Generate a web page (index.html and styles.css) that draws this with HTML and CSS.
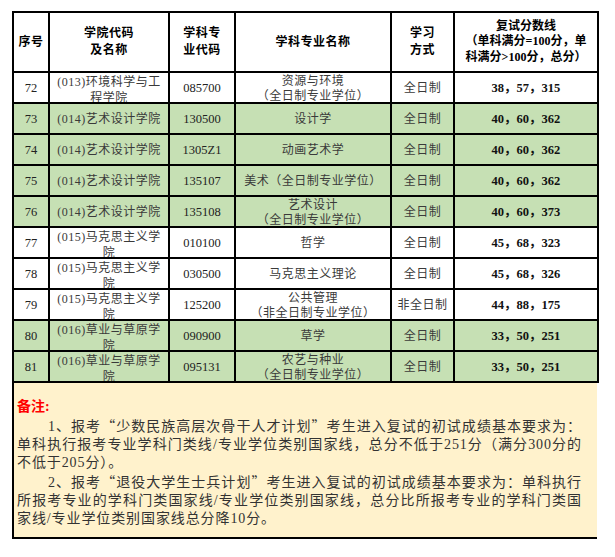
FILE: index.html
```html
<!DOCTYPE html>
<html lang="zh-CN">
<head>
<meta charset="utf-8">
<title>复试分数线</title>
<link rel="stylesheet" href="styles.css">
</head>
<body>
<div class="page">
  <table class="grid">
    <colgroup>
      <col class="c1"><col class="c2"><col class="c3"><col class="c4"><col class="c5"><col class="c6">
    </colgroup>
    <thead>
      <tr class="head">
        <th>序号</th>
        <th>学院代码<br>及名称</th>
        <th>学科专<br>业代码</th>
        <th>学科专业名称</th>
        <th>学习<br>方式</th>
        <th class="h6">复试分数线<br>（单科满分=100分，单<br>科满分&gt;100分，总分）</th>
      </tr>
    </thead>
    <tbody>
      <tr>
        <td class="n">72</td>
        <td><div class="clip">(013)环境科学与工程学院</div></td>
        <td class="n">085700</td>
        <td><div class="clip two">资源与环境<br>（全日制专业学位）</div></td>
        <td>全日制</td>
        <td class="s">38，57，315</td>
      </tr>
      <tr class="green">
        <td class="n">73</td>
        <td>(014)艺术设计学院</td>
        <td class="n">130500</td>
        <td>设计学</td>
        <td>全日制</td>
        <td class="s">40，60，362</td>
      </tr>
      <tr class="green">
        <td class="n">74</td>
        <td>(014)艺术设计学院</td>
        <td class="n">1305Z1</td>
        <td>动画艺术学</td>
        <td>全日制</td>
        <td class="s">40，60，362</td>
      </tr>
      <tr class="green">
        <td class="n">75</td>
        <td>(014)艺术设计学院</td>
        <td class="n">135107</td>
        <td>美术（全日制专业学位）</td>
        <td>全日制</td>
        <td class="s">40，60，362</td>
      </tr>
      <tr class="green">
        <td class="n">76</td>
        <td>(014)艺术设计学院</td>
        <td class="n">135108</td>
        <td><div class="clip two">艺术设计<br>（全日制专业学位）</div></td>
        <td>全日制</td>
        <td class="s">40，60，373</td>
      </tr>
      <tr>
        <td class="n">77</td>
        <td><div class="clip">(015)马克思主义学院</div></td>
        <td class="n">010100</td>
        <td>哲学</td>
        <td>全日制</td>
        <td class="s">45，68，323</td>
      </tr>
      <tr>
        <td class="n">78</td>
        <td><div class="clip">(015)马克思主义学院</div></td>
        <td class="n">030500</td>
        <td>马克思主义理论</td>
        <td>全日制</td>
        <td class="s">45，68，326</td>
      </tr>
      <tr>
        <td class="n">79</td>
        <td><div class="clip">(015)马克思主义学院</div></td>
        <td class="n">125200</td>
        <td><div class="clip two">公共管理<br>（非全日制专业学位）</div></td>
        <td>非全日制</td>
        <td class="s">44，88，175</td>
      </tr>
      <tr class="green">
        <td class="n">80</td>
        <td><div class="clip">(016)草业与草原学院</div></td>
        <td class="n">090900</td>
        <td>草学</td>
        <td>全日制</td>
        <td class="s">33，50，251</td>
      </tr>
      <tr class="green">
        <td class="n">81</td>
        <td><div class="clip">(016)草业与草原学院</div></td>
        <td class="n">095131</td>
        <td><div class="clip two">农艺与种业<br>（全日制专业学位）</div></td>
        <td>全日制</td>
        <td class="s">33，50，251</td>
      </tr>
    </tbody>
  </table>
  <div class="notes">
    <div class="note-title">备注:</div>
    <div class="line first">1、报考<span class="q">“</span>少数民族高层次骨干人才计划<span class="q">”</span>考生进入复试的初试成绩基本要求为：</div>
    <div class="line">单科执行报考专业学科门类线/专业学位类别国家线，总分不低于251分（满分300分的</div>
    <div class="line last">不低于205分）。</div>
    <div class="line first">2、报考<span class="q">“</span>退役大学生士兵计划<span class="q">”</span>考生进入复试的初试成绩基本要求为：单科执行</div>
    <div class="line">所报考专业的学科门类国家线/专业学位类别国家线，总分比所报考专业的学科门类国</div>
    <div class="line last">家线/专业学位类别国家线总分降10分。</div>
  </div>
</div>
</body>
</html>
```

FILE: styles.css
```css
* {
  box-sizing: border-box;
}

body {
  margin: 0;
  background: #ffffff;
  font-family: "Liberation Serif", "Noto Sans CJK SC", serif;
  color: #333333;
}

.page {
  padding: 11px 0 0 12px;
  width: 615px;
}

.grid {
  border-collapse: collapse;
  table-layout: fixed;
  width: 585px;
}

.c1 { width: 36px; }
.c2 { width: 120px; }
.c3 { width: 66px; }
.c4 { width: 156px; }
.c5 { width: 63px; }
.c6 { width: 144px; }

.grid th,
.grid td {
  border: 2px solid #000000;
  text-align: center;
  vertical-align: middle;
  padding: 0 5px;
}

.head {
  height: 60px;
}

.grid th {
  font-size: 12px;
  font-weight: 700;
  line-height: 17px;
  letter-spacing: 0.5px;
  color: #000000;
  padding: 0 2px;
}

.grid th.h6 {
  line-height: 15.5px;
  letter-spacing: 0;
}

.grid tbody tr {
  height: 31px;
}

.grid td {
  font-size: 12px;
  letter-spacing: 0.5px;
  color: #3a3a3a;
  line-height: 16px;
}

.grid td.n {
  font-size: 12.5px;
  letter-spacing: 0;
  color: #222222;
}

.grid td.s {
  font-size: 12.5px;
  font-weight: 700;
  letter-spacing: 0;
  color: #111111;
}

.green {
  background: #c6e0b4;
}

.clip {
  height: 29px;
  overflow: hidden;
  line-height: 16px;
  padding-top: 1px;
}

.clip.two {
  line-height: 15px;
  padding-top: 1px;
}

.notes {
  width: 585px;
  background: #fff2cc;
  border-left: 2px solid #000000;
  border-bottom: 2px solid #000000;
  padding: 15px 15px 9px 3px;
  font-size: 14px;
  line-height: 18px;
  letter-spacing: 0.9px;
  color: #333333;
}

.note-title {
  color: #ff0000;
  font-weight: 700;
  letter-spacing: 0;
}

.line {
  text-align: justify;
  text-align-last: justify;
}

.line.first {
  text-indent: 31px;
}

.line.last {
  text-align-last: left;
}

.q {
  font-family: "Noto Sans CJK SC", sans-serif;
}
```
